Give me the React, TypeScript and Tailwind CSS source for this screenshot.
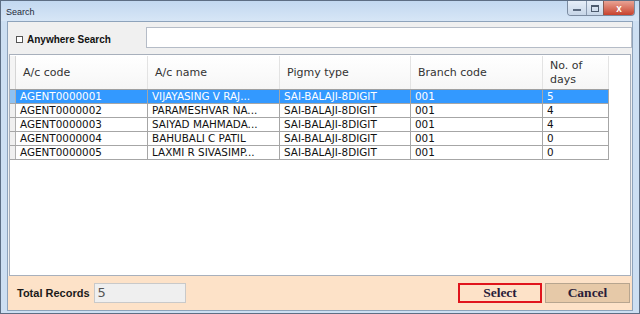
import React from 'react';

type Row = { code: string; name: string; type: string; branch: string; days: string };

const rows: Row[] = [
    { code: 'AGENT0000001', name: 'VIJAYASING V RAJ...', type: 'SAI-BALAJI-8DIGIT', branch: '001', days: '5' },
    { code: 'AGENT0000002', name: 'PARAMESHVAR NA...', type: 'SAI-BALAJI-8DIGIT', branch: '001', days: '4' },
    { code: 'AGENT0000003', name: 'SAIYAD MAHMADA...', type: 'SAI-BALAJI-8DIGIT', branch: '001', days: '4' },
    { code: 'AGENT0000004', name: 'BAHUBALI C PATIL', type: 'SAI-BALAJI-8DIGIT', branch: '001', days: '0' },
    { code: 'AGENT0000005', name: 'LAXMI R SIVASIMP...', type: 'SAI-BALAJI-8DIGIT', branch: '001', days: '0' },
];

// column widths in px (A/c code .. No. of days)
const cols = ['w-[132px]', 'w-[132px]', 'w-[131px]', 'w-[132px]', 'w-[66px]'];

function TitleBar() {
    return (
        <div className="h-[20px] flex items-start justify-between bg-gradient-to-b from-[#c2d8f0] to-[#d7e6f6] pl-[5px] pr-[4px]">
            <span className="text-[9px] text-[#1e2a3a] mt-[5px] font-['Liberation_Sans',sans-serif]">Search</span>
            {/* caption buttons */}
            <div className="flex h-[15px] rounded-b-[4px] border border-t-0 border-[#7b8ba0] overflow-hidden">
                <div className="w-[18px] bg-gradient-to-b from-[#e6eef8] to-[#c7d6e8] flex items-end justify-center pb-[4px]">
                    <div className="w-[8px] h-[2px] bg-[#5c6b80]" />
                </div>
                <div className="w-[17px] bg-gradient-to-b from-[#e6eef8] to-[#c7d6e8] border-l border-[#8a9ab0] flex items-center justify-center">
                    <div className="w-[8px] h-[7px] border border-[#4d5b6e] border-t-2" />
                </div>
                <div className="w-[31px] bg-gradient-to-b from-[#e8a294] to-[#c6402c] border-l border-[#8a5a50] flex items-center justify-center text-white text-[10px] font-bold font-['Liberation_Sans',sans-serif]">
                    x
                </div>
            </div>
        </div>
    );
}

function Grid() {
    return (
        <div className="flex-1 mx-[1px] border border-[#a8b0bc] bg-white font-['DejaVu_Sans',sans-serif]">
            <div className="flex flex-col mt-[1px]">
                {/* header */}
                <div className="flex h-[33px]">
                    <div className="w-[6px] border-r border-[#d5d5d5] bg-[#f4f4f4]" />
                    {['A/c code', 'A/c name', 'Pigmy type', 'Branch code', 'No. of days'].map((h, i) => (
                        <div
                            key={h}
                            className={`${cols[i]} border-r border-[#e3e3e3] bg-gradient-to-b from-white to-[#f6f6f6] flex items-center pl-[7px] pr-[4px] text-[11px] leading-[14px] text-[#333]`}
                        >
                            {h}
                        </div>
                    ))}
                </div>
                {/* rows */}
                <div className="border-t border-[#a0a0a0] w-[599px]">
                    {rows.map((r, idx) => {
                        const sel = idx === 0;
                        return (
                            <div key={r.code} className="flex h-[14px] border-b border-[#a6a6a6]">
                                <div className={`w-[6px] border-r border-[#b0b0b0] ${sel ? 'bg-[#8fc2f2]' : 'bg-[#f0f0f0]'}`} />
                                {[r.code, r.name, r.type, r.branch, r.days].map((v, i) => (
                                    <div
                                        key={i}
                                        className={`${cols[i]} border-r border-[#a6a6a6] pl-[4px] text-[10.4px] leading-[13px] whitespace-nowrap overflow-hidden ${
                                            sel ? 'bg-[#3399ff] text-white' : 'text-[#111]'
                                        }`}
                                    >
                                        {v}
                                    </div>
                                ))}
                            </div>
                        );
                    })}
                </div>
            </div>
        </div>
    );
}

export default function App() {
    return (
        <div className="w-[640px] h-[314px] flex flex-col border border-[#5d6e84] bg-[#cddff2] overflow-hidden">
            <TitleBar />
            <div className="flex-1 flex flex-col ml-[6px] mr-[6px] mb-[2px] border border-[#8ea3bb] bg-[#f0f0f0]">
                {/* search row */}
                <div className="h-[32px] flex items-start">
                    <label className="flex items-center gap-[4px] ml-[8px] mt-[10px] text-[10px] font-bold text-[#111] font-['Liberation_Sans',sans-serif]">
                        <span className="w-[7px] h-[7px] border border-[#555] bg-white" />
                        Anywhere Search
                    </label>
                    <input
                        className="ml-auto mt-[5px] w-[486px] h-[21px] bg-white border border-[#b5bcc7] outline-none"
                        readOnly
                    />
                </div>
                <Grid />
                {/* footer */}
                <div className="h-[34px] bg-[#fde2c8] flex items-center pl-[9px] pr-[2px] font-['Liberation_Sans',sans-serif]">
                    <span className="text-[11px] font-bold text-[#1a1a1a]">Total Records</span>
                    <div className="ml-[4px] w-[92px] h-[20px] bg-[#efefef] border border-[#c9c9c9] flex items-center pl-[3px] text-[13px] text-[#555] font-['DejaVu_Sans',sans-serif]">
                        5
                    </div>
                    <button className="ml-auto w-[84px] h-[20px] border-2 border-[#e0141c] bg-[#fde2c8] text-[13.5px] leading-[16px] font-bold text-[#2a1c38] font-['Liberation_Serif',serif]">
                        Select
                    </button>
                    <button className="ml-[3px] w-[85px] h-[20px] border border-[#b7a58f] bg-[#e6c9a8] text-[13.5px] leading-[16px] font-bold text-[#2a1c38] font-['Liberation_Serif',serif]">
                        Cancel
                    </button>
                </div>
            </div>
        </div>
    );
}
